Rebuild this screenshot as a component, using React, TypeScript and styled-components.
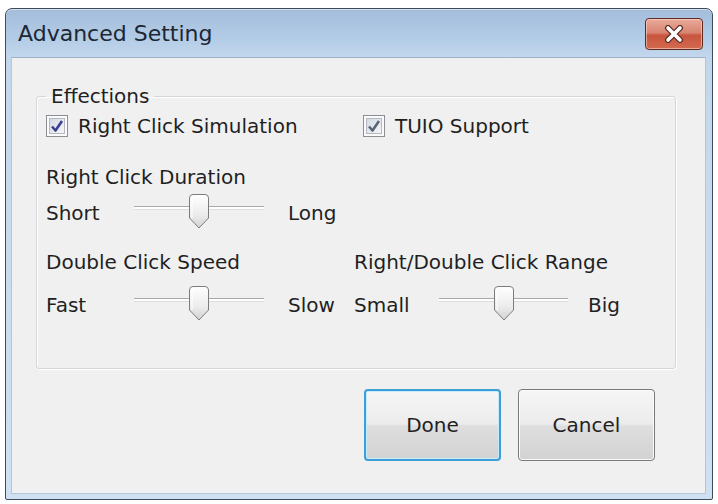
import styled, { createGlobalStyle } from 'styled-components'

const GlobalStyle = createGlobalStyle`
  html, body {
    margin: 0;
    padding: 0;
    background: #ffffff;
  }
  body {
    font-family: "DejaVu Sans", "Liberation Sans", sans-serif;
    color: #1f1f1f;
  }
`

function CheckMark({ color }: { color: string }) {
  return (
    <svg width="22" height="22" viewBox="0 0 22 22">
      <defs>
        <linearGradient id={`cb-${color}`} x1="0" y1="0" x2="1" y2="1">
          <stop offset="0" stopColor="#d4d8e2" />
          <stop offset="1" stopColor="#f6f7fa" />
        </linearGradient>
      </defs>
      <rect x="0.5" y="0.5" width="21" height="21" fill="#fbfbfb" stroke="#8c8e94" />
      <rect x="3.5" y="3.5" width="15" height="15" fill={`url(#cb-${color})`} stroke="#b4b8c2" />
      <path d="M6 11.5 L9.5 15.5 L16 6" fill="none" stroke={color} strokeWidth="2.6" strokeLinejoin="round" />
    </svg>
  )
}

function Thumb() {
  return (
    <svg width="20" height="35" viewBox="0 0 20 35">
      <defs>
        <linearGradient id="thumb-fill" x1="0" y1="0" x2="0" y2="1">
          <stop offset="0" stopColor="#ffffff" />
          <stop offset="0.6" stopColor="#ececec" />
          <stop offset="1" stopColor="#d2d2d2" />
        </linearGradient>
      </defs>
      <path
        d="M4 0.5 H16 A3.5 3.5 0 0 1 19.5 4 V24 L10 34 L0.5 24 V4 A3.5 3.5 0 0 1 4 0.5 Z"
        fill="url(#thumb-fill)"
        stroke="#7c7c7c"
      />
      <path d="M3 24 V4.5 A2 2 0 0 1 5 2.5" fill="none" stroke="#ffffff" strokeWidth="1" />
    </svg>
  )
}

function CloseGlyph() {
  return (
    <svg width="20" height="18" viewBox="0 0 20 18">
      <path d="M4 3 L16 15 M16 3 L4 15" stroke="#5a2a22" strokeWidth="6" strokeLinecap="round" />
      <path d="M4 3 L16 15 M16 3 L4 15" stroke="#ffffff" strokeWidth="3.6" strokeLinecap="round" />
    </svg>
  )
}

type SliderProps = {
  start: string
  end: string
  value: number
  labelWidth: number
  endGap: number
  trackWidth: number
}

function Slider({ start, end, value, labelWidth, endGap, trackWidth }: SliderProps) {
  return (
    <SliderRow>
      <EndLabel width={labelWidth}>{start}</EndLabel>
      <Track width={trackWidth}>
        <TrackLine />
        <ThumbHolder style={{ left: `${value}%` }}>
          <Thumb />
        </ThumbHolder>
      </Track>
      <EndLabel gap={endGap}>{end}</EndLabel>
    </SliderRow>
  )
}

export default function App() {
  return (
    <>
      <GlobalStyle />
      <Window>
        <TitleBar>
          <Title>Advanced Setting</Title>
          <CloseButton aria-label="Close">
            <CloseGlyph />
          </CloseButton>
        </TitleBar>
        <Content>
          <Group>
            <Legend>Effections</Legend>
            <SettingsGrid>
              <CheckItem>
                <CheckMark color="#3d3f94" />
                Right Click Simulation
              </CheckItem>
              <CheckItem indent={9}>
                <CheckMark color="#5b6478" />
                TUIO Support
              </CheckItem>

              <Heading>Right Click Duration</Heading>
              <span />

              <Slider start="Short" end="Long" value={50} labelWidth={88} endGap={24} trackWidth={130} />
              <span />

              <Heading>Double Click Speed</Heading>
              <Heading>Right/Double Click Range</Heading>

              <Slider start="Fast" end="Slow" value={50} labelWidth={88} endGap={24} trackWidth={130} />
              <Slider start="Small" end="Big" value={50} labelWidth={85} endGap={20} trackWidth={129} />
            </SettingsGrid>
          </Group>
          <Footer>
            <Button primary>Done</Button>
            <Button>Cancel</Button>
          </Footer>
        </Content>
      </Window>
    </>
  )
}

const Window = styled.div`
  box-sizing: border-box;
  margin: 8px 0 0 5px;
  width: 708px;
  height: 492px;
  padding: 0 6px 5px 5px;
  display: flex;
  flex-direction: column;
  border: 1px solid #3d4d5c;
  border-radius: 7px 7px 2px 2px;
  background: linear-gradient(180deg, #a3bddb 0px, #b3cce6 30px, #c3d7ec 48px, #cfe0f2 100%);
  box-shadow: inset 0 1px 0 rgba(255, 255, 255, 0.55);
`

const TitleBar = styled.div`
  height: 48px;
  display: flex;
  align-items: flex-start;
  justify-content: space-between;
  flex-shrink: 0;
`

const Title = styled.div`
  padding: 12px 0 0 7px;
  font-size: 22px;
  line-height: 26px;
  color: #1c2733;
`

const CloseButton = styled.button`
  box-sizing: border-box;
  margin: 9px 3px 0 0;
  width: 58px;
  height: 32px;
  padding: 0;
  display: flex;
  align-items: center;
  justify-content: center;
  border: 1px solid #5e2a22;
  border-radius: 4px;
  background: linear-gradient(180deg, #e9aa9a 0%, #d98573 45%, #c8553e 55%, #d36b4f 100%);
  box-shadow: inset 0 0 0 1px rgba(255, 220, 210, 0.55);
`

const Content = styled.div`
  flex: 1;
  display: flex;
  flex-direction: column;
  padding: 26px 29px 0 24px;
  background: #f0f0f0;
  border: 1px solid #b4c6d8;
  border-top-color: #9fb3c8;
`

const Group = styled.fieldset`
  margin: 0;
  padding: 0 0 45px 9px;
  border: 1px solid #d3d6da;
  border-radius: 3px;
  box-shadow: inset 1px 1px 0 #ffffff, 1px 1px 0 #ffffff;
`

const Legend = styled.legend`
  padding: 0 5px;
  font-size: 20px;
  line-height: 24px;
`

const SettingsGrid = styled.div`
  display: grid;
  grid-template-columns: 308px 1fr;
  grid-template-rows: 51px 30px 55px 37px 36px;
  align-items: start;
  padding-top: 6px;
  font-size: 20px;
`

const CheckItem = styled.label<{ indent?: number }>`
  display: flex;
  align-items: center;
  gap: 10px;
  height: 24px;
  line-height: 24px;
  padding-left: ${(p) => p.indent ?? 0}px;
  white-space: nowrap;
`

const Heading = styled.div`
  line-height: 24px;
  white-space: nowrap;
`

const SliderRow = styled.div`
  display: flex;
  align-items: center;
  height: 36px;
  white-space: nowrap;
`

const EndLabel = styled.span<{ width?: number; gap?: number }>`
  line-height: 24px;
  width: ${(p) => (p.width ? `${p.width}px` : 'auto')};
  margin-left: ${(p) => p.gap ?? 0}px;
`

const Track = styled.div<{ width: number }>`
  position: relative;
  width: ${(p) => p.width}px;
  height: 36px;
`

const TrackLine = styled.div`
  position: absolute;
  left: 0;
  right: 0;
  top: 11px;
  height: 1px;
  background: #a9a9a9;
  border-bottom: 2px solid #ffffff;
  box-shadow: 0 1px 0 #dcdcdc;
`

const ThumbHolder = styled.div`
  position: absolute;
  top: -1px;
  width: 20px;
  height: 35px;
  margin-left: -10px;
  line-height: 0;
`

const Footer = styled.div`
  display: flex;
  justify-content: flex-end;
  gap: 17px;
  padding: 20px 21px 0 0;
`

const Button = styled.button<{ primary?: boolean }>`
  box-sizing: border-box;
  width: 137px;
  height: 72px;
  font-family: "DejaVu Sans", "Liberation Sans", sans-serif;
  font-size: 20px;
  color: #1f1f1f;
  border-radius: 4px;
  border: ${(p) => (p.primary ? '2px solid #3d9fd6' : '1px solid #7a7a7a')};
  background: linear-gradient(180deg, #f6f6f6 0%, #ececec 48%, #dedede 52%, #d2d2d2 100%);
  box-shadow: ${(p) => (p.primary ? 'inset 0 0 0 1px #c4ecfb' : 'inset 0 0 0 1px #fbfbfb')};
`
